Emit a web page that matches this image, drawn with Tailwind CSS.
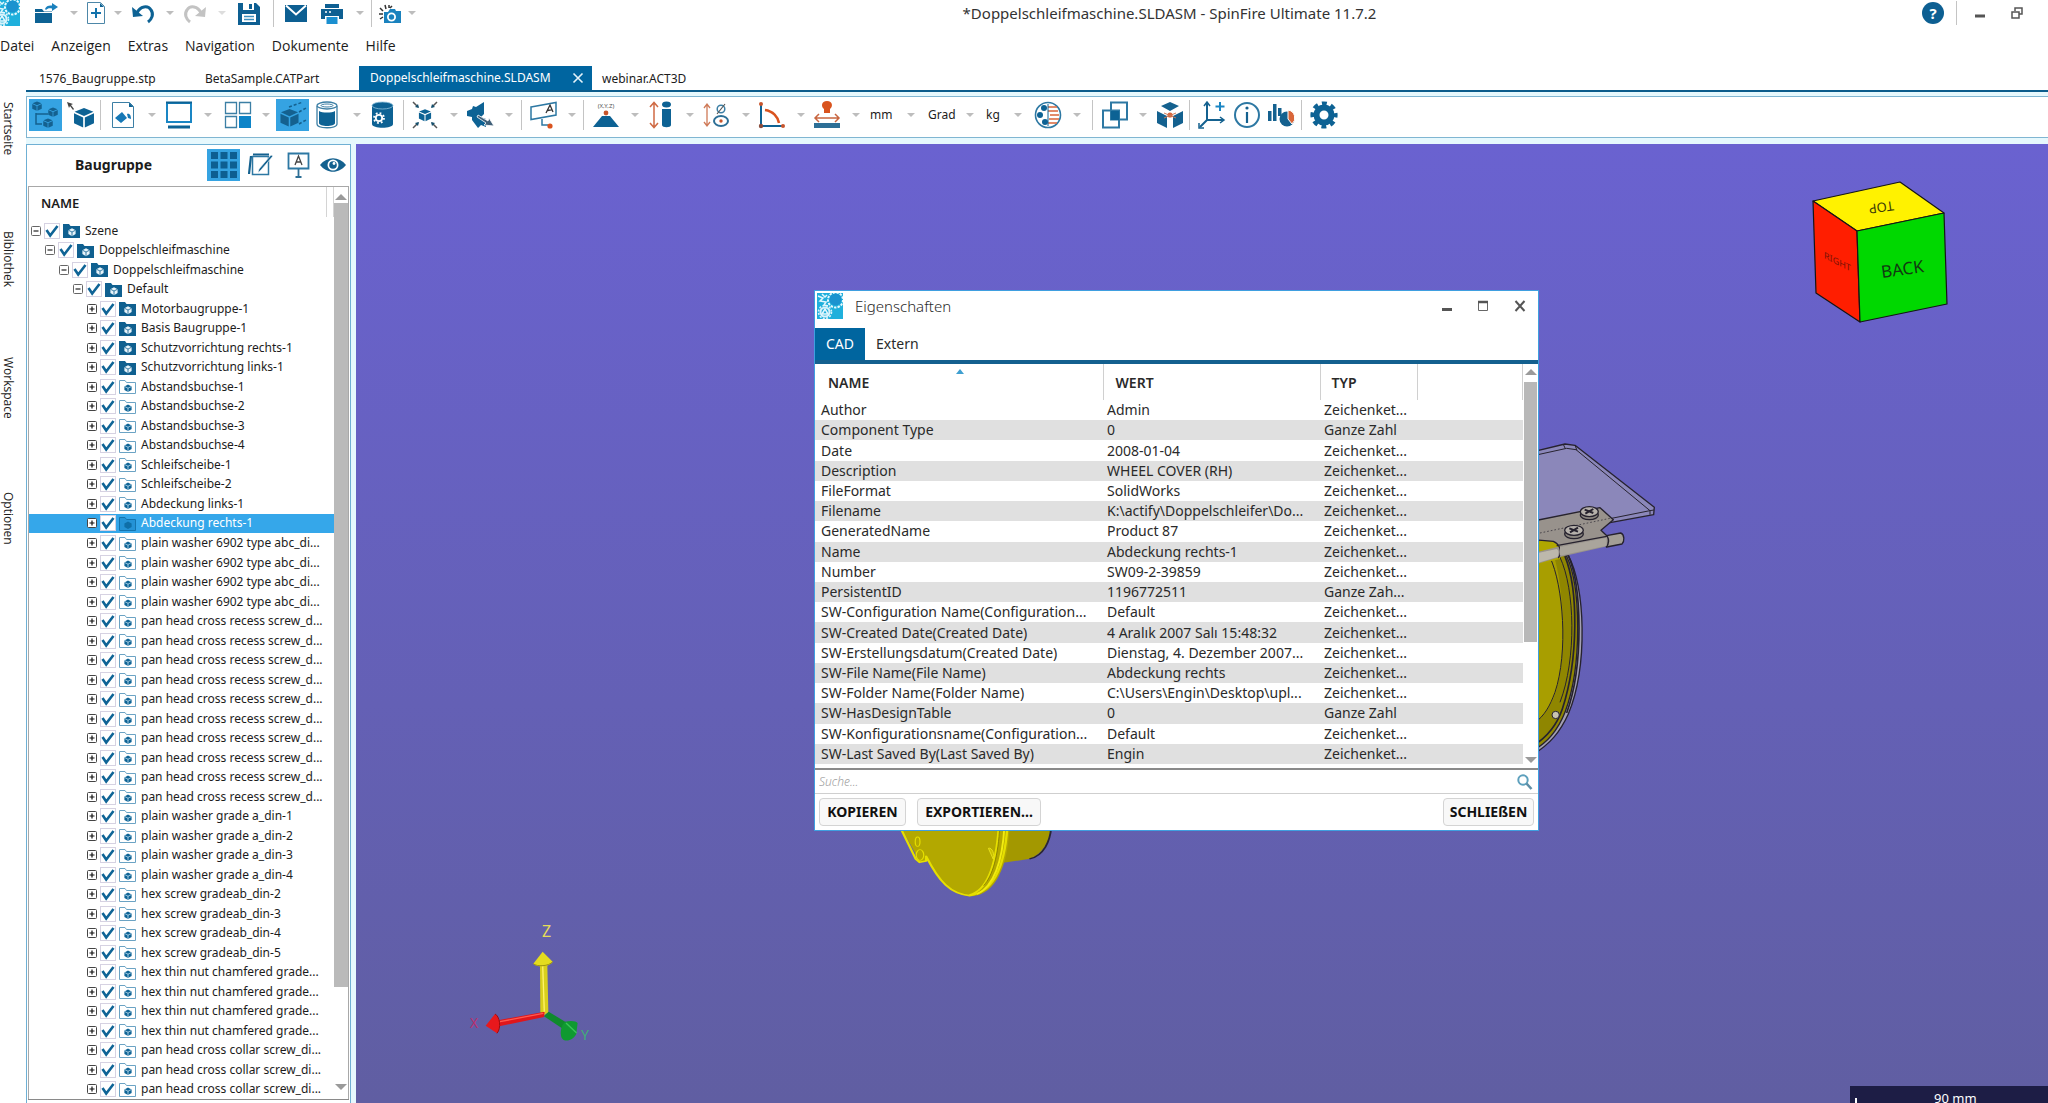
<!DOCTYPE html>
<html lang="de">
<head>
<meta charset="utf-8">
<title>*Doppelschleifmaschine.SLDASM - SpinFire Ultimate 11.7.2</title>
<script src="https://cdn.jsdelivr.net/npm/@tailwindcss/browser@4"></script>
</head>
<body class="h-screen overflow-hidden flex flex-col bg-white text-[#1c1c1c] font-['Noto_Sans','Open_Sans',sans-serif]">

<svg class="hidden">
  <symbol id="dd" viewBox="0 0 10 8"><path d="M1 2h8L5 6z" fill="#bdbdbd"/></symbol>
  <symbol id="logo" viewBox="0 0 26 26"><rect width="26" height="26" fill="#1fb0dc"/><circle cx="18.500" cy="7" r="7.500" fill="none" stroke="#e9f8fd" stroke-width="2" stroke-dasharray="2.400 1.200"/><circle cx="18.500" cy="6.500" r="6" fill="#1b93cf"/><circle cx="8" cy="19" r="4.500" fill="none" stroke="#d9f3fb" stroke-width="2"/><circle cx="8" cy="19" r="6.500" fill="none" stroke="#d9f3fb" stroke-width="1.600" stroke-dasharray="2 1.400"/><path d="M1 3l5 2-3 3 6 1-2 3 4 1M5 1l3 3 2-2M5 21l3-5 3 5z" stroke="#e3f7fd" stroke-width="1.500" fill="none"/></symbol>
  <symbol id="cube" viewBox="0 0 20 20"><path d="M10 1l9 3.600-9 4L1 4.600z" /><path d="M0.500 6l8.700 4v9.500L.5 15.500zM19.500 6l-8.700 4v9.500l8.700-4z"/></symbol>
  <symbol id="check" viewBox="0 0 16 16"><path d="M2.500 7l3.700 5.500L13.500 3" fill="none" stroke="#0f6496" stroke-width="2.600"/></symbol>
  <symbol id="folder" viewBox="0 0 17 15"><path d="M0 1h6l1.500 2H17v12H0z" fill="#0f6090"/><path d="M9 5.200l3.600 2v3.900L9 13.200l-3.600-2.100V7.200z" fill="#e8f4fa"/><path d="M5.600 7.300L9 9l3.400-1.700M9 9v4" stroke="#0f6090" stroke-width=".8" fill="none"/></symbol>
  <symbol id="part" viewBox="0 0 17 15"><path d="M.5 1.500h5.500l1.500 2h9v11H.5z" fill="none" stroke="#6ba3c4"/><path d="M9 5.500l3.600 2v3.600L9 13l-3.600-1.900V7.500z" fill="#0f6496"/><path d="M5.600 7.500L9 9.200l3.400-1.700M9 9v4" stroke="#bcdcec" stroke-width=".8" fill="none"/></symbol>
  <symbol id="partsel" viewBox="0 0 17 15"><path d="M.5 1.500h5.500l1.500 2h9v11H.5z" fill="#2493d6" stroke="#1474ae"/><path d="M9 5.500l3.600 2v3.600L9 13l-3.600-1.900V7.500z" fill="#0f6fa8"/></symbol>
  <symbol id="plus" viewBox="0 0 10 10"><rect x=".5" y=".5" width="9" height="9" rx="1" fill="#fff" stroke="#444"/><path d="M2.500 5h5M5 2.500v5" stroke="#111" stroke-width="1.200"/></symbol>
  <symbol id="minus" viewBox="0 0 10 10"><rect x=".5" y=".5" width="9" height="9" rx="1" fill="#fff" stroke="#666"/><path d="M2.500 5h5" stroke="#222" stroke-width="1.200"/></symbol>
</svg>

<header class="shrink-0">
  <div class="flex items-center h-[30px] pb-1">
    <svg class="w-5 h-[26px]" viewBox="6 0 20 26"><use href="#logo" width="26" height="26"/></svg>
    <button aria-label="Öffnen" class="ml-[14px]"><svg class="size-6" viewBox="0 0 24 24"><path d="M1 8h7l2 2.500h8V22H1z" fill="#0d6294"/><path d="M1 11.500h17" stroke="#fff"/><path d="M11 8c1-3 4-4 7-3.500V2l6 4-6 4V7.500c-3-.5-4.500 0-6 1.500z" fill="#1a80bd"/></svg></button>
    <button aria-label="Öffnen Optionen" class="ml-[11px]"><svg class="w-2.5 h-2"><use href="#dd"/></svg></button>
    <button aria-label="Neu" class="ml-[5px]"><svg class="size-6" viewBox="0 0 24 24"><path d="M3.500 1.500h13l4 4v17h-17z" fill="#fff" stroke="#4d87a8"/><path d="M16 2v4h4z" fill="#0d6294"/><path d="M12 7v10M7 12h10" stroke="#1373ac" stroke-width="2"/></svg></button>
    <button aria-label="Neu Optionen" class="ml-[5px]"><svg class="w-2.5 h-2"><use href="#dd"/></svg></button>
    <button aria-label="Rückgängig" class="ml-2"><svg class="size-6" viewBox="0 0 24 24"><path d="M6 12C9 5 17 4 20 9c3 4 1 9-3 12" fill="none" stroke="#0d6294" stroke-width="3"/><path d="M1 6l1 10 10-1z" fill="#0d6294"/></svg></button>
    <button aria-label="Rückgängig Optionen" class="ml-2.5"><svg class="w-2.5 h-2"><use href="#dd"/></svg></button>
    <button aria-label="Wiederherstellen" class="ml-2"><svg class="size-6" viewBox="0 0 24 24"><path d="M18 12C15 5 7 4 4 9c-3 4-1 9 3 12" fill="none" stroke="#c3c3c3" stroke-width="3"/><path d="M23 6l-1 10-10-1z" fill="#c3c3c3"/></svg></button>
    <button aria-label="Wiederherstellen Optionen" class="ml-2.5 opacity-50"><svg class="w-2.5 h-2"><use href="#dd"/></svg></button>
    <button aria-label="Speichern" class="ml-2.5"><svg class="size-6" viewBox="0 0 24 24"><path d="M1 2h18l4 4v18H1z" fill="#0d5f92"/><path d="M6 2h11v7H6z" fill="#fff"/><path d="M12 3h3v5h-3z" fill="#0d5f92"/><path d="M5 13h14v8H5z" fill="#fff"/><path d="M7 15.500h10M7 18.500h10" stroke="#3b8fc0" stroke-width="1.500"/></svg></button>
    <span class="ml-3 w-px h-7 bg-[#c4c4c4]"></span>
    <button aria-label="Senden" class="ml-2.5"><svg class="size-6" viewBox="0 0 24 24"><path d="M1 4h22v17H1z" fill="#0d5f92"/><path d="M2 4.500l10 9 10-9" fill="none" stroke="#fff" stroke-width="2"/></svg></button>
    <button aria-label="Drucken" class="ml-3"><svg class="size-6" viewBox="0 0 24 24"><path d="M5 3h14v4H5zM1 8h22v10h-4v-3H5v3H1z" fill="#0d5f92"/><path d="M6.500 16h11v7h-11z" fill="#1a8fd0"/><path d="M5 11h2M9 11h2" stroke="#fff" stroke-width="1.500"/></svg></button>
    <button aria-label="Drucken Optionen" class="ml-[11px]"><svg class="w-2.5 h-2"><use href="#dd"/></svg></button>
    <span class="ml-1.5 w-px h-7 bg-[#c4c4c4]"></span>
    <button aria-label="Schnappschuss" class="ml-1.5"><svg class="size-6" viewBox="0 0 24 24"><path d="M6 11h4l2-3h5l1 2h5v12H6z" fill="#1a82be"/><circle cx="13.500" cy="16" r="3.600" fill="none" stroke="#fff" stroke-width="1.800"/><path d="M1 13h4M2 7l3 3M7 4l1 4M11 4v3M14 5l-2 2M2 18l3-2" stroke="#333" stroke-width="1.500"/></svg></button>
    <button aria-label="Schnappschuss Optionen" class="ml-[5px]"><svg class="w-2.5 h-2"><use href="#dd"/></svg></button>
    <h1 class="flex-1 text-center text-[15px] leading-5 text-[#333]">*Doppelschleifmaschine.SLDASM - SpinFire Ultimate 11.7.2</h1>
    <button aria-label="Hilfe" class="size-[22px] rounded-full bg-[#0d5f92] text-white font-bold text-[15px] leading-5">?</button>
    <span class="ml-3 w-px h-6 bg-[#c4c4c4]"></span>
    <button aria-label="Minimieren" class="ml-[18px]"><svg class="size-2.5" viewBox="0 0 10 10"><path d="M0 8h10" stroke="#555" stroke-width="3"/></svg></button>
    <button aria-label="Verkleinern" class="ml-[26px] mr-[25px]"><svg class="size-3" viewBox="0 0 12 12"><path d="M4 4V1h7v6H8M1 5h7v6H1z" fill="none" stroke="#555" stroke-width="1.500"/></svg></button>
  </div>
  <nav class="flex gap-[17px] h-9 pt-1.5 text-sm leading-5 font-['Open_Sans','Noto_Sans',sans-serif]">
    <a href="#">Datei</a><a href="#">Anzeigen</a><a href="#">Extras</a><a href="#">Navigation</a><a href="#">Dokumente</a><a href="#">Hilfe</a>
  </nav>
</header>

<div class="flex flex-1 min-h-0">
  <aside class="w-[26px] shrink-0 flex flex-col pt-9 text-xs leading-4 font-['Open_Sans','Noto_Sans',sans-serif]">
    <button class="h-[129px] w-4 text-left [writing-mode:vertical-rl]">Startseite</button>
    <button class="h-[126px] w-4 text-left [writing-mode:vertical-rl]">Bibliothek</button>
    <button class="h-[135px] w-4 text-left [writing-mode:vertical-rl]">Workspace</button>
    <button class="h-20 w-4 text-left [writing-mode:vertical-rl]">Optionen</button>
  </aside>
  <main class="flex-1 min-w-0 flex flex-col">
    <div class="flex h-[26px] shrink-0 text-xs leading-[26px] border-b-2 border-[#0b5c8c]">
      <button class="w-[166px] pl-[13px] text-left">1576_Baugruppe.stp</button>
      <button class="w-[167px] pl-[13px] text-left">BetaSample.CATPart</button>
      <div class="w-[233px] flex items-center justify-between pl-[11px] pr-2 bg-[#0065a0] text-white"><button>Doppelschleifmaschine.SLDASM</button><button aria-label="Tab schließen"><svg class="size-3" viewBox="0 0 12 12"><path d="M1.500 1.500l9 9M10.500 1.500l-9 9" stroke="#e6f4fb" stroke-width="1.600"/></svg></button></div>
      <button class="pl-2.5">webinar.ACT3D</button>
    </div>

    <div class="flex-1 min-h-0 flex flex-col gap-1.5 pt-1 bg-[#e6f8fd]">
      <div role="toolbar" class="shrink-0 h-[42px] flex items-center pb-1 pl-0.5 bg-white border border-r-0 border-[#80b6d2]">
        <button aria-label="Baumansicht" class="w-[33px] h-8 bg-[#35a3e2] flex items-center justify-center"><svg class="size-7" viewBox="0 0 28 28" fill="#14618f"><use href="#cube" width="10" height="10"/><use href="#cube" x="16" y="6" width="10" height="10"/><use href="#cube" x="11" y="17" width="10" height="10"/><path d="M4 12v11h6M4 13h12" fill="none" stroke="#14618f" stroke-width="1.500"/></svg></button>
        <button aria-label="Auswählen" class="ml-[5px]"><svg class="size-7" viewBox="0 0 28 28"><path d="M0 1l6 2-2 1 3 4-1 1-3-4-1 2z" fill="#444"/><use href="#cube" x="6" y="6" width="22" height="21" fill="#0d6294"/></svg></button>
        <span class="ml-[5px] w-px h-[30px] bg-[#c4c4c4]"></span>
        <button aria-label="Farbe" class="ml-2"><svg class="size-7" viewBox="0 0 28 28"><path d="M3.500 1.500h17l4 4v21h-21z" fill="none" stroke="#3c7fa5"/><path d="M20 1.500v4.500h4.500z" fill="#0d6294"/><path d="M6 17l7-6 5 6-6 5zM18 13c3-1 4 2 4 5l-3-1z" fill="#1678b6"/></svg></button>
        <button aria-label="Farbe Optionen" class="ml-2.5"><svg class="w-2.5 h-2"><use href="#dd"/></svg></button>
        <button aria-label="Anzeige" class="ml-2"><svg class="size-7" viewBox="0 0 28 28"><rect x="2" y="2" width="24" height="19" fill="#fff" stroke="#1a86c4" stroke-width="2"/><path d="M1 1.500h26" stroke="#0d6294" stroke-width="2"/><path d="M3 26h22" stroke="#0d6294" stroke-width="3"/></svg></button>
        <button aria-label="Anzeige Optionen" class="ml-2.5"><svg class="w-2.5 h-2"><use href="#dd"/></svg></button>
        <button aria-label="Ansichten" class="ml-[11px]"><svg class="size-7" viewBox="0 0 28 28"><path d="M1.500 1.500h11v11h-11zM15.500 1.500h11v11h-11zM1.500 15.500h11v11h-11z" fill="#fff" stroke="#3c7fa5" stroke-width="1.300"/><path d="M15 15h12v12H15z" fill="#0d84c8"/></svg></button>
        <button aria-label="Ansichten Optionen" class="ml-[9px]"><svg class="w-2.5 h-2"><use href="#dd"/></svg></button>
        <button aria-label="Perspektive" class="ml-[5px] w-[33px] h-8 bg-[#35a3e2] flex items-center justify-center"><svg class="size-7" viewBox="0 0 28 28"><use href="#cube" x="1" y="6" width="19" height="21" fill="#14618f"/><path d="M10 6l14-5M20 11l7-4M20 23l7-4" stroke="#14618f" stroke-width="1.500" stroke-dasharray="3 2"/></svg></button>
        <button aria-label="Darstellung" class="ml-1"><svg class="size-7" viewBox="0 0 28 28"><path d="M4 5v18c0 5 20 5 20 0V5" fill="#fff" stroke="#3c7fa5" stroke-width="1.300"/><path d="M6 10v12c0 4 16 4 16 0V10c-3 2-13 2-16 0z" fill="#0d6294"/><ellipse cx="14" cy="4.500" rx="10" ry="3.500" fill="#fff" stroke="#3c7fa5" stroke-width="1.300"/><ellipse cx="14" cy="4.500" rx="6" ry="1.500" fill="#fff" stroke="#3c7fa5"/></svg></button>
        <button aria-label="Darstellung Optionen" class="ml-[11px]"><svg class="w-2.5 h-2"><use href="#dd"/></svg></button>
        <button aria-label="Datenbank" class="ml-1.5"><svg class="size-7" viewBox="0 0 28 28"><path d="M4 5v18c0 5 21 5 21 0V5z" fill="#0d6294"/><ellipse cx="14.500" cy="4.500" rx="10.500" ry="3.500" fill="#0d6294" stroke="#8fc0da" stroke-width=".8"/><circle cx="11" cy="17" r="3.200" fill="none" stroke="#fff" stroke-width="1.800"/><circle cx="11" cy="17" r="5" fill="none" stroke="#fff" stroke-width="1.800" stroke-dasharray="1.800 2.130"/></svg></button>
        <span class="ml-[7px] w-px h-[30px] bg-[#c4c4c4]"></span>
        <button aria-label="Explosion" class="ml-[7px]"><svg class="size-7" viewBox="0 0 28 28"><use href="#cube" x="7.500" y="7" width="13" height="14" fill="#0d6294"/><path d="M2 1l5 5M26 1l-5 5M2 27l5-5M26 27l-5-5" stroke="#555" stroke-width="1.500"/><path d="M8 7L7 3 4 6zM20 7l1-4 3 3zM8 21l-1 4-3-3zM20 21l1 4 3-3z" fill="#14506f"/></svg></button>
        <button aria-label="Explosion Optionen" class="ml-2.5"><svg class="w-2.5 h-2"><use href="#dd"/></svg></button>
        <button aria-label="Schnitt" class="ml-2"><svg class="size-7" viewBox="0 0 28 28"><path d="M0 10l5-2 1-3 3 1 8-5v12l-3 3 5 2v8l-5-2-3 3-6-8v-3l-5-1z" fill="#0d6294"/><path d="M11 14l10 6 1-3 5 8-10-1 2-2-9-6z" fill="#3f5f78" stroke="#fff" stroke-width=".8"/></svg></button>
        <button aria-label="Schnitt Optionen" class="ml-[9px]"><svg class="w-2.5 h-2"><use href="#dd"/></svg></button>
        <span class="ml-[7px] w-px h-[30px] bg-[#c4c4c4]"></span>
        <button aria-label="Notiz" class="ml-2"><svg class="size-7" viewBox="0 0 28 28"><path d="M1 6l25-4.500V14L1 18.500z" fill="#fff" stroke="#2d78a3" stroke-width="1.500"/><path d="M16 12l4-8 3 7M17.500 9.500l4-.7" fill="none" stroke="#333" stroke-width="1.300"/><path d="M12 18v6h6" fill="none" stroke="#2d78a3" stroke-width="1.500"/><circle cx="20" cy="25" r="2.600" fill="#d9531e"/></svg></button>
        <button aria-label="Notiz Optionen" class="ml-[9px]"><svg class="w-2.5 h-2"><use href="#dd"/></svg></button>
        <span class="ml-1.5 w-px h-[30px] bg-[#c4c4c4]"></span>
        <button aria-label="Koordinaten messen" class="ml-2"><svg class="size-7" viewBox="0 0 28 28"><text x="14" y="7" text-anchor="middle" font-size="6" fill="#555">(X,Y,Z)</text><circle cx="14" cy="12" r="2.400" fill="#c8552c"/><path d="M10 15h8l9 11H1z" fill="#0d6294"/></svg></button>
        <button aria-label="Koordinaten Optionen" class="ml-2.5"><svg class="w-2.5 h-2"><use href="#dd"/></svg></button>
        <button aria-label="Länge messen" class="ml-[7px]"><svg class="size-7" viewBox="0 0 28 28"><path d="M7 2v24M3 6l4-4.500L11 6M3 22l4 4.500 4-4.500" fill="none" stroke="#cf6a44" stroke-width="1.500"/><path d="M15 8h9v16c0 3-9 3-9 0z" fill="#0d6294"/><ellipse cx="19.500" cy="3.500" rx="4.500" ry="3" fill="#0d6294"/></svg></button>
        <button aria-label="Länge Optionen" class="ml-2.5"><svg class="w-2.5 h-2"><use href="#dd"/></svg></button>
        <button aria-label="Durchmesser messen" class="ml-[7px]"><svg class="size-7" viewBox="0 0 28 28"><path d="M5 3v22M2 7l3-4 3 4M2 21l3 4 3-4" fill="none" stroke="#cf7a58" stroke-width="1.300"/><circle cx="19" cy="8" r="3.800" fill="none" stroke="#3c7fa5" stroke-width="1.500"/><path d="M15 13l8-10" stroke="#555" stroke-width="1.200"/><ellipse cx="19" cy="20" rx="7" ry="5" fill="none" stroke="#2d6f96" stroke-width="2"/><circle cx="19" cy="20" r="1.700" fill="#c8552c"/></svg></button>
        <button aria-label="Durchmesser Optionen" class="ml-[11px]"><svg class="w-2.5 h-2"><use href="#dd"/></svg></button>
        <button aria-label="Winkel messen" class="ml-[7px]"><svg class="size-7" viewBox="0 0 28 28"><path d="M3 4v21h22" fill="none" stroke="#0d6294" stroke-width="2"/><path d="M7 9c8 1 13 7 14 13" fill="none" stroke="#d9531e" stroke-width="2.500"/><circle cx="3" cy="3" r="2" fill="#c8552c"/><circle cx="25" cy="25" r="2" fill="#c8552c"/><circle cx="3" cy="25" r="2.200" fill="#8a4b3a"/></svg></button>
        <button aria-label="Winkel Optionen" class="ml-2.5"><svg class="w-2.5 h-2"><use href="#dd"/></svg></button>
        <button aria-label="Abstand messen" class="ml-[7px]"><svg class="size-7" viewBox="0 0 28 28"><path d="M14 0c6 0 6 6 3 8v4h-6V8c-3-2-3-8 3-8z" fill="#d9531e"/><path d="M2 17h24M6 13l-4 4 4 4M22 13l4 4-4 4" fill="none" stroke="#c8653f" stroke-width="1.500"/><path d="M1 22h26v5H1z" fill="#2d6f96"/></svg></button>
        <button aria-label="Abstand Optionen" class="ml-2.5"><svg class="w-2.5 h-2"><use href="#dd"/></svg></button>
        <label class="ml-[9px] w-[46px] flex items-center text-xs leading-4"><select aria-label="Längeneinheit" class="appearance-none flex-1 min-w-0"><option>mm</option></select><svg class="w-2.5 h-2"><use href="#dd"/></svg></label>
        <label class="ml-3 w-[47px] flex items-center text-xs leading-4"><select aria-label="Winkeleinheit" class="appearance-none flex-1 min-w-0"><option>Grad</option></select><svg class="w-2.5 h-2"><use href="#dd"/></svg></label>
        <label class="ml-[11px] w-[37px] flex items-center text-xs leading-4"><select aria-label="Masseneinheit" class="appearance-none flex-1 min-w-0"><option>kg</option></select><svg class="w-2.5 h-2"><use href="#dd"/></svg></label>
        <button aria-label="Vergleich" class="ml-[11px]"><svg class="size-7" viewBox="0 0 28 28"><circle cx="14" cy="14" r="12.500" fill="#fff" stroke="#2d78a3" stroke-width="1.600"/><path d="M14 6h9M16 14h9M14 22h9M14 10h10M15 18h10" stroke="#d9663a" stroke-width="1.700"/><circle cx="10" cy="7" r="3" fill="#0d6294"/><circle cx="6" cy="14" r="3" fill="#0d6294"/><circle cx="11" cy="21" r="3" fill="#0d6294"/><path d="M14 3v22" stroke="#0d6294"/></svg></button>
        <button aria-label="Vergleich Optionen" class="ml-2.5"><svg class="w-2.5 h-2"><use href="#dd"/></svg></button>
        <span class="ml-2.5 w-px h-[30px] bg-[#c4c4c4]"></span>
        <button aria-label="Überlagern" class="ml-2"><svg class="size-7" viewBox="0 0 28 28"><path d="M10 1.500h16v17H10zM2 9.500h16v17H2z" fill="none" stroke="#2d78a3" stroke-width="2"/><path d="M10 10h8v9h-8z" fill="#0d6294"/></svg></button>
        <button aria-label="Überlagern Optionen" class="ml-[9px]"><svg class="w-2.5 h-2"><use href="#dd"/></svg></button>
        <button aria-label="Bauteile" class="ml-2"><svg class="size-7" viewBox="0 0 28 28"><path d="M14 1l9 4-9 5-9-5zM1 10l10 5v12L1 22zM27 10l-10 5v12l10-5z" fill="#14618f"/><circle cx="14" cy="14" r="2.600" fill="#d9663a"/><path d="M8 12l12 5M20 12L8 17" stroke="#cf7a58"/></svg></button>
        <span class="ml-[5px] w-px h-[30px] bg-[#c4c4c4]"></span>
        <button aria-label="Achsen" class="ml-2"><svg class="size-7" viewBox="0 0 28 28"><path d="M9 2v17h16M9 19l-7 7" fill="none" stroke="#14618f" stroke-width="2"/><path d="M6 5l3-4 3 4M22 16l4 3-4 3M1 22v5h5" fill="none" stroke="#14618f" stroke-width="1.500"/><path d="M22 1v9M17.500 5.500h9" stroke="#1a86c4" stroke-width="2"/></svg></button>
        <button aria-label="Information" class="ml-[7px]"><svg class="size-7" viewBox="0 0 28 28"><circle cx="14" cy="14" r="12" fill="#fff" stroke="#2d78a3" stroke-width="2"/><path d="M14 11v11" stroke="#14618f" stroke-width="2.200"/><circle cx="14" cy="7" r="1.600" fill="#14618f"/></svg></button>
        <button aria-label="Statistik" class="ml-1.5"><svg class="size-7" viewBox="0 0 28 28"><path d="M1 10h3.500v10H1zM6 3h3.500v17H6zM11 7h3.500v8H11z" fill="#14618f"/><circle cx="20" cy="18" r="7.500" fill="#14618f"/><path d="M21 18V9a8 8 0 0 1 4 14z" fill="#d9663a" stroke="#fff"/></svg></button>
        <span class="ml-1.5 w-px h-[30px] bg-[#c4c4c4]"></span>
        <button aria-label="Einstellungen" class="ml-2"><svg class="size-7" viewBox="0 0 28 28"><circle cx="14" cy="14" r="7.500" fill="none" stroke="#0d6294" stroke-width="6"/><circle cx="14" cy="14" r="11.600" fill="none" stroke="#0d6294" stroke-width="4" stroke-dasharray="4.900 4.210" stroke-dashoffset="2.450"/></svg></button>
      </div>

      <div class="flex-1 min-h-0 flex gap-[5px]">
        <section class="w-[325px] shrink-0 flex flex-col bg-white border border-b-0 border-[#6fb0d4] px-px">
          <div class="flex items-center h-[41px] shrink-0 pb-0.5">
            <h2 class="w-[179px] pl-[47px] font-bold text-sm leading-5">Baugruppe</h2>
            <button aria-label="Raster" class="w-[33px] h-8 bg-[#35a3e2] flex items-center justify-center"><svg class="size-7" viewBox="0 0 28 28"><path d="M1 1h7v7H1zM10.500 1h7v7h-7zM20 1h7v7h-7zM1 10.500h7v7H1zM10.500 10.500h7v7h-7zM20 10.500h7v7h-7zM1 20h7v7H1zM10.500 20h7v7h-7zM20 20h7v7h-7z" fill="#0d5f92"/></svg></button>
            <button aria-label="Bearbeiten" class="ml-2"><svg class="size-[26px]" viewBox="0 0 26 26"><path d="M4.500 4.500h16v18h-16z" fill="#fff" stroke="#2d78a3" stroke-width="1.500"/><path d="M5 2.500h16M3 4L1 22" stroke="#14618f" stroke-width="2.200"/><path d="M25 4L13 18l-3 3 1-4L23 3z" fill="#14618f" stroke="#fff" stroke-width=".6"/></svg></button>
            <button aria-label="Notizen" class="ml-3"><svg class="size-[26px]" viewBox="0 0 26 26"><path d="M2.500 1.500h20v15h-20z" fill="#fff" stroke="#2d78a3" stroke-width="1.800"/><path d="M9 13l3.500-9L16 13M10 10h5" fill="none" stroke="#444" stroke-width="1.300"/><path d="M12.500 17v8M9.500 25h6" stroke="#2d6f96" stroke-width="1.800"/></svg></button>
            <button aria-label="Sichtbarkeit" class="ml-2"><svg class="size-[26px]" viewBox="0 0 26 26"><path d="M0 13C7 4 19 4 26 13 19 22 7 22 0 13z" fill="#14618f"/><circle cx="13" cy="13" r="5.500" fill="#fff"/><circle cx="13" cy="13" r="3.800" fill="#14618f"/><circle cx="14" cy="11.500" r="1.400" fill="#fff"/></svg></button>
          </div>
          <div class="flex-1 min-h-0 flex border-t border-x border-[#a8a8a8]">
            <div class="flex-1 min-w-0 flex flex-col">
              <div class="h-[34px] shrink-0 flex"><div class="flex-1 pl-3 pt-1.5 font-semibold text-[13px] leading-5">NAME</div><div class="h-[30px] w-2 border-x border-[#d4d4d4]"></div></div>
              <ul id="tree" class="flex-1 min-h-0 flex flex-col text-xs"></ul>
            </div>
            <div class="w-[14px] shrink-0 flex flex-col items-center pt-1.5 pb-2">
              <svg class="w-3 h-2" viewBox="0 0 12 8"><path d="M0 7l6-6 6 6z" fill="#9a9a9a"/></svg>
              <div class="mt-0.5 w-full flex-1 bg-[#bababa]"></div>
              <div class="h-24"></div>
              <svg class="w-3 h-2" viewBox="0 0 12 8"><path d="M0 1l6 6 6-6z" fill="#9a9a9a"/></svg>
            </div>
          </div>
          <div class="h-1 shrink-0 border-t border-[#8a8a8a]"></div>
        </section>

        <section class="relative flex-1 min-w-0 overflow-hidden bg-linear-to-b from-[#6a62d0] to-[#605ea2]">
          <svg class="w-full h-full" viewBox="356 145 1692 959" preserveAspectRatio="xMidYMin slice">
            <!-- wheel cover, right -->
            <g transform="translate(1500 400) scale(.3333)" stroke="#26222e" stroke-width="4" stroke-linejoin="round">
              <path d="M100 158L195 135l30 4L463 325l-2 22L330 371 100 420z" fill="#8b87ba"/>
              <path d="M100 170L200 148l28 4L450 335l12-2M450 335v12M190 136l6 13M225 139l6 15M335 358L450 335" fill="none" stroke-width="3"/>
              <path d="M205 470C255 560 265 800 205 945 180 1000 150 1035 100 1066V470z" fill="#a39fb3"/>
              <path d="M200 472C242 560 248 800 195 940 175 990 145 1030 100 1054V440z" fill="#8f8600"/>
              <path d="M195 472C235 570 236 780 187 930 170 980 140 1015 100 1040M205 470C245 560 252 800 200 942" fill="none" stroke-width="5"/>
              <path d="M150 440C190 520 205 760 170 870 155 920 135 950 100 975V430z" fill="#a89e00" stroke="none"/>
              <path d="M150 475C190 560 205 760 165 880 150 920 135 950 100 975M180 475C225 570 230 780 180 910" fill="none" stroke-width="3"/>
              <path d="M100 425h55l25 15v40l-80 18z" fill="#b0a700" stroke="none"/>
              <path d="M320 410l42-8c12 5 12 25 4 33l-46 9z" fill="#a39e96"/>
              <path d="M100 366L240 336 300 326 340 362 303 394 322 412v30L180 474l-80 24v-36l80-20-20-15-60-5z" fill="#98928c" stroke="none"/>
              <path d="M100 366L300 326 340 362 303 394 322 412c6 12 4 24-4 33M170 440l150-28M100 422l60 5c20 8 28 34 15 50" fill="none"/>
              <path d="M120 402L330 358" stroke-width="2" stroke-dasharray="5 6" fill="none"/>
              <path d="M180 444l140-28v24l-140 30z" fill="#aaa59c" stroke="none"/>
              <path d="M100 465l70-15c8 4 6 18 2 24l-72 22z" fill="#bdb8ac" stroke="none"/>
              <ellipse cx="268" cy="348" rx="27" ry="14" fill="#8a857f"/><ellipse cx="268" cy="338" rx="27" ry="15" fill="#b5b0aa"/><path d="M254 332l26 10M280 330l-24 14" stroke-width="6"/>
              <ellipse cx="222" cy="405" rx="28" ry="14" fill="#8a857f"/><ellipse cx="222" cy="394" rx="28" ry="15" fill="#b5b0aa"/><path d="M208 388l26 10M234 386l-24 14" stroke-width="6"/>
              <circle cx="167" cy="948" r="11" fill="#c9c4b0" stroke-width="3"/>
            </g>
            <!-- wheel cover, lower left -->
            <g transform="translate(810 640) scale(.472 .3333)" stroke-linejoin="round">
              <path d="M405 560h106c-2 40-15 85-48 100l-60 13z" fill="#a39800"/>
              <path d="M511 565c-2 40-15 85-46 95" fill="none" stroke="#2a2633" stroke-width="4"/>
              <path d="M186 550L222 640l8 30 14-4 4-12c25 75 50 113 95 118 50-5 78-90 80-222z" fill="#b3a800"/>
              <path d="M190 562l34 98 8 10 14-4v-14c28 78 52 113 92 118 56-10 75-100 80-205h-18c-6 120-25 190-62 203" fill="none" stroke="#e6df00" stroke-width="5"/>
              <path d="M412 560c-4 110-22 180-58 206" fill="none" stroke="#f2ec10" stroke-width="4"/>
              <path d="M402 560c-3 90-15 150-34 180" fill="none" stroke="#7c7400" stroke-width="2"/>
              <ellipse cx="228" cy="608" rx="5" ry="14" fill="none" stroke="#e6df00" stroke-width="2.500"/><ellipse cx="233" cy="648" rx="8" ry="16" fill="none" stroke="#e6df00" stroke-width="2.500"/><path d="M378 628c8-4 14 20 10 32z" fill="#c9bf00" stroke="#eee720" stroke-width="2"/>
            </g>
            <!-- orientation cube -->
            <g transform="translate(1780 160)" stroke="#151515" stroke-width="1.200" stroke-linejoin="round">
              <path d="M33 42L120 23l44 31L77 72z" fill="#fff200"/>
              <path d="M33 42l44 30 3 91-44-29z" fill="#ff1e00"/>
              <path d="M77 72l87-18 3 91-87 18z" fill="#00d800"/>
            </g>
            <g fill="#123a12">
              <text x="0" y="0" transform="translate(1882 279) rotate(-8)" font-size="17">BACK</text>
              <text x="0" y="0" transform="translate(1824 259) skewY(27)" font-size="9" fill="#7a1206">RIGHT</text>
              <text x="0" y="0" transform="translate(1893 202) rotate(172)" font-size="13" fill="#3d3a08">TOP</text>
            </g>
            <!-- axis triad -->
            <g transform="translate(440 900) scale(.3333)">
              <path d="M300 195h22l3 145-12 8-12-8z" fill="#d8cf1c"/><path d="M308 195l5 145" stroke="#fff36a" stroke-width="4"/><path d="M308 158l30 30c-8 16-48 18-58 6z" fill="#e4dc1e"/><path d="M280 194c10 10 48 8 58-6" stroke="#9b9310" stroke-width="3" fill="none"/>
              <path d="M314 338l-140 26 4 18 134-28z" fill="#e0161b"/><path d="M310 343l-130 25" stroke="#ff5a50" stroke-width="4"/><path d="M137 380l28-35c14 6 20 42 6 58z" fill="#e8181c"/><path d="M165 345c14 6 20 42 6 58" stroke="#9c0d10" stroke-width="3" fill="none"/>
              <path d="M312 352l14-14 52 32-12 18z" fill="#0f8a2c"/><path d="M375 368c18-4 34-2 38 4l-4 32c-8 20-36 28-44 12-6-14-2-36 10-48z" fill="#0f9a30"/><path d="M378 372l32 30" stroke="#3cc45a" stroke-width="4"/>
            </g>
            <text x="542" y="938" font-size="16" fill="#e6dc58">Z</text>
            <text x="470" y="1029" font-size="14" fill="#b8306e">X</text>
            <text x="581" y="1041" font-size="14" fill="#3fae78">Y</text>
          </svg>

          <div class="absolute right-0 bottom-0 w-[198px] h-[17px] bg-[#1d1d45] text-white overflow-hidden">
            <div class="pl-[84px] pt-0.5 text-[13px] leading-5">90 mm</div>
            <div class="absolute left-[5px] top-3 w-0.5 h-2 bg-white"></div>
          </div>

          <div role="dialog" aria-labelledby="dt" class="absolute left-[458px] top-[146px] w-[725px] bg-white border border-[#3f9fe0] text-[#2a2a2a]">
            <div class="flex items-center h-[37px] pl-0.5 pr-3 pb-2">
              <svg class="size-[26px]"><use href="#logo"/></svg>
              <h2 id="dt" class="flex-1 pl-3 font-light text-[15px] leading-5">Eigenschaften</h2>
              <button aria-label="Minimieren"><svg class="size-3" viewBox="0 0 12 12"><path d="M1 9.500h10" stroke="#555" stroke-width="3"/></svg></button>
              <button aria-label="Maximieren" class="ml-6"><svg class="size-3" viewBox="0 0 12 12"><path d="M1.500 1.500h9v9h-9z" fill="none" stroke="#666"/><path d="M1 2h10" stroke="#555" stroke-width="2.500"/></svg></button>
              <button aria-label="Schließen" class="ml-[25px]"><svg class="size-3" viewBox="0 0 12 12"><path d="M1.500 1l9 10M10.500 1l-9 10" stroke="#555" stroke-width="2"/></svg></button>
            </div>
            <div class="flex h-9 border-b-4 border-[#14608f] text-sm leading-8">
              <button class="w-[50px] bg-[#00659f] text-white">CAD</button>
              <button class="pl-[11px]">Extern</button>
            </div>
            <div class="flex h-[406px] border-b-2 border-[#8a8a8a] overflow-hidden">
              <div class="flex-1">
                <table class="w-full h-[400px] table-fixed text-left text-sm leading-4">
                  <colgroup><col class="w-[288px]"><col class="w-[217px]"><col class="w-[97px]"><col></colgroup>
                  <thead><tr class="h-9 leading-5">
                    <th class="relative pl-[13px] pt-0.5 font-semibold border-r border-[#d0d0d0]">NAME<svg class="absolute left-[141px] top-1 w-2 h-1.5" viewBox="0 0 8 6"><path d="M0 6l4-5 4 5z" fill="#3f9fd0"/></svg></th>
                    <th class="pl-3 pt-0.5 font-semibold border-r border-[#d0d0d0]">WERT</th>
                    <th class="pl-[11px] pt-0.5 font-semibold border-r border-[#d0d0d0]">TYP</th>
                    <th class="border-r border-[#d0d0d0]"></th>
                  </tr></thead>
                  <tbody id="props"></tbody>
                </table>
              </div>
              <div class="w-[15px] shrink-0 flex flex-col items-center pt-1 pb-1">
                <svg class="w-3 h-2" viewBox="0 0 12 8"><path d="M0 7l6-6 6 6z" fill="#9a9a9a"/></svg>
                <div class="mt-1.5 w-[13px] h-[260px] bg-[#b8b8b8]"></div>
                <div class="flex-1"></div>
                <svg class="w-3 h-2" viewBox="0 0 12 8"><path d="M0 1l6 6 6-6z" fill="#9a9a9a"/></svg>
              </div>
            </div>
            <div class="flex items-center h-6 pl-1 pr-[5px] border-b border-[#cfcfcf]">
              <input aria-label="Suche" placeholder="Suche..." class="flex-1 italic font-light text-xs leading-4 outline-none placeholder:text-[#a0a0a0]">
              <button aria-label="Suchen"><svg class="size-4" viewBox="0 0 16 16"><circle cx="6" cy="6" r="4.700" fill="none" stroke="#5da0bd" stroke-width="2"/><path d="M9.500 9.500l5 5.500" stroke="#5f8fa6" stroke-width="2.600"/></svg></button>
            </div>
            <div class="flex items-center gap-[11px] h-9 px-1 font-bold text-sm leading-5 text-[#111]">
              <button class="w-[87px] h-7 rounded-sm border border-[#d4d4d4] bg-[#f8f8f8]">KOPIEREN</button>
              <button class="w-[124px] h-7 rounded-sm border border-[#d4d4d4] bg-[#f8f8f8]">EXPORTIEREN...</button>
              <button class="ml-auto w-[91px] h-7 rounded-sm border border-[#d4d4d4] bg-[#f8f8f8]">SCHLIEßEN</button>
            </div>
          </div>
        </section>
      </div>
    </div>
  </main>
</div>

<script>
const rep = (t, n) => Array(n).fill(t);
const seq = (t, a, b) => Array.from({length: b - a + 1}, (_, i) => t + (a + i));
const parts = [...seq('Abstandsbuchse-',1,4), ...seq('Schleifscheibe-',1,2), 'Abdeckung links-1', 'Abdeckung rechts-1',
  ...rep('plain washer 6902 type abc_di...',4), ...rep('pan head cross recess screw_d...',10), ...seq('plain washer grade a_din-',1,4),
  ...seq('hex screw gradeab_din-',2,5), ...rep('hex thin nut chamfered grade...',4), ...rep('pan head cross collar screw_di...',3)];
const rows = [['Szene',0,1],['Doppelschleifmaschine',1,1],['Doppelschleifmaschine',2,1],['Default',3,1],
  ...['Motorbaugruppe-1','Basis Baugruppe-1','Schutzvorrichtung rechts-1','Schutzvorrichtung links-1'].map(t => [t,4,1]), ...parts.map(t => [t,4,0])];
const pads = ['pl-0.5','pl-4','pl-[30px]','pl-11','pl-[58px]'];
document.getElementById('tree').innerHTML = rows.map(([t,l,f], i) => {
  const sel = t === 'Abdeckung rechts-1';
  return `<li class="flex-1 min-h-0 flex items-center overflow-hidden whitespace-nowrap ${pads[l]} ${sel ? 'bg-[#35a7ea] text-white' : ''}">
    <button aria-label="Zweig" class="mr-[3px]"><svg class="size-2.5"><use href="#${l < 4 ? 'minus' : 'plus'}"/></svg></button>
    <span class="grid mr-[3px]"><input type="checkbox" checked id="n${i}" class="col-start-1 row-start-1 appearance-none size-4 border border-[#d6d2e2] bg-white"><svg class="col-start-1 row-start-1 size-4 pointer-events-none"><use href="#check"/></svg></span>
    <svg class="w-[17px] h-[15px] mr-[5px] shrink-0"><use href="#${f ? 'folder' : sel ? 'partsel' : 'part'}"/></svg>
    <label for="n${i}" class="leading-4">${t}</label></li>`;
}).join('');

const Z = 'Zeichenket...';
const props = [['Author','Admin',Z],['Component Type','0','Ganze Zahl'],['Date','2008-01-04',Z],['Description','WHEEL COVER (RH)',Z],['FileFormat','SolidWorks',Z],
 ['Filename','K:\\actify\\Doppelschleifer\\Do...',Z],['GeneratedName','Product 87',Z],['Name','Abdeckung rechts-1',Z],['Number','SW09-2-39859',Z],['PersistentID','1196772511','Ganze Zah...'],
 ['SW-Configuration Name(Configuration...','Default',Z],['SW-Created Date(Created Date)','4 Aralık 2007 Salı 15:48:32',Z],['SW-Erstellungsdatum(Created Date)','Dienstag, 4. Dezember 2007...',Z],
 ['SW-File Name(File Name)','Abdeckung rechts',Z],['SW-Folder Name(Folder Name)','C:\\Users\\Engin\\Desktop\\upl...',Z],['SW-HasDesignTable','0','Ganze Zahl'],
 ['SW-Konfigurationsname(Configuration...','Default',Z],['SW-Last Saved By(Last Saved By)','Engin',Z]];
document.getElementById('props').innerHTML = props.map((r, i) =>
  `<tr class="${i % 2 ? 'bg-[#e0e0e0]' : 'bg-white'}"><td class="pl-1.5 whitespace-nowrap">${r[0]}</td><td class="pl-1 whitespace-nowrap">${r[1]}</td><td class="pl-1 whitespace-nowrap">${r[2]}</td><td></td></tr>`).join('');
</script>
</body>
</html>
